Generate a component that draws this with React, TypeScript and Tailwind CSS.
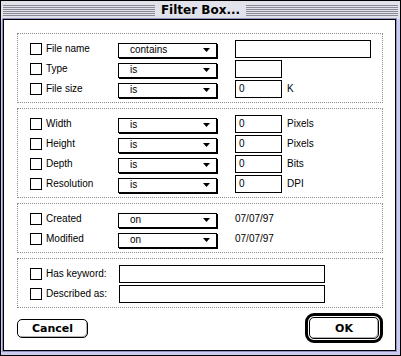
import React from "react";

type Row = {
  label: string;
  op?: string;
  field?: number;
  value?: string;
  unit?: string;
  text?: string;
};

const GROUPS: Row[][] = [
  [
    { label: "File name", op: "contains", field: 136 },
    { label: "Type", op: "is", field: 47 },
    { label: "File size", op: "is", field: 47, value: "0", unit: "K" },
  ],
  [
    { label: "Width", op: "is", field: 47, value: "0", unit: "Pixels" },
    { label: "Height", op: "is", field: 47, value: "0", unit: "Pixels" },
    { label: "Depth", op: "is", field: 47, value: "0", unit: "Bits" },
    { label: "Resolution", op: "is", field: 47, value: "0", unit: "DPI" },
  ],
  [
    { label: "Created", op: "on", text: "07/07/97" },
    { label: "Modified", op: "on", text: "07/07/97" },
  ],
];

function Stripes() {
  return (
    <div className="flex-1 flex flex-col gap-px">
      {[0, 1, 2, 3, 4, 5].map(i => (
        <div key={i} className="h-px bg-[#8a8a96]" />
      ))}
    </div>
  );
}

function Checkbox() {
  return <div className="w-[12px] h-[12px] border border-black bg-white shrink-0" />;
}

function Popup({ value }: { value: string }) {
  return (
    <div className="w-[99px] h-[15px] mt-[2px] border border-black bg-white shadow-[1px_1px_0_0_#000] flex items-center pl-[11px] pr-[6px] shrink-0">
      <span className="flex-1 leading-none">{value}</span>
      <svg width="7" height="4" viewBox="0 0 7 4">
        <polygon points="0,0 7,0 3.5,4" fill="#000" />
      </svg>
    </div>
  );
}

function FilterRow({ row }: { row: Row }) {
  return (
    <div className="h-[20px] flex items-center">
      <div className="w-[88px] flex items-center gap-[4px] shrink-0">
        <Checkbox />
        <span className="leading-none">{row.label}</span>
      </div>
      {row.op && <Popup value={row.op} />}
      <div className="ml-[18px] flex items-center">
        {row.field && (
          <div
            className="h-[18px] border border-black bg-white flex items-center pl-[3px] leading-none"
            style={{ width: row.field }}
          >
            {row.value}
          </div>
        )}
        {row.unit && <span className="ml-[5px] leading-none">{row.unit}</span>}
        {row.text && <span className="leading-none">{row.text}</span>}
      </div>
    </div>
  );
}

function Group({ children }: { children: React.ReactNode }) {
  return (
    <div className="border border-dotted border-[#8c8c8c] pt-[5px] pb-[3px] px-[12px] flex flex-col">
      {children}
    </div>
  );
}

export default function App() {
  return (
    <div className="w-[401px] h-[356px] border border-black bg-[#ccccf0] flex flex-col font-['Liberation_Sans',Arial,sans-serif] text-[10px] text-black">
      {/* title bar */}
      <div className="h-[18px] shrink-0 bg-[#e2e2ea] flex items-center px-[2px]">
        <Stripes />
        <span className="px-[6px] font-['DejaVu_Sans',sans-serif] font-bold text-[12px] leading-none">
          Filter Box...
        </span>
        <Stripes />
      </div>

      {/* dialog body */}
      <div className="flex-1 ml-[2px] mr-[4px] mb-[4px] border border-black bg-white shadow-[0_0_0_1px_#8f8fc0] pt-[13px] pl-[13px] pr-[12px] flex flex-col gap-[5px]">
        {GROUPS.map((rows, i) => (
          <Group key={i}>
            {rows.map(r => (
              <FilterRow key={r.label} row={r} />
            ))}
          </Group>
        ))}

        <Group>
          {["Has keyword:", "Described as:"].map(l => (
            <div key={l} className="h-[20px] flex items-center">
              <div className="w-[89px] flex items-center gap-[4px] shrink-0">
                <Checkbox />
                <span className="leading-none">{l}</span>
              </div>
              <div className="w-[206px] h-[18px] border border-black bg-white" />
            </div>
          ))}
        </Group>

        <div className="h-[30px] flex items-center justify-between">
          <button className="w-[71px] h-[19px] border border-black rounded-[5px] bg-white shadow-[inset_-1px_-1px_0_0_#b0b0b0] font-['DejaVu_Sans',sans-serif] font-bold text-[11px] leading-none">
            Cancel
          </button>
          <div className="w-[78px] h-[30px] border-[3px] border-black rounded-[9px] p-px flex">
            <button className="flex-1 border border-black rounded-[5px] bg-white shadow-[inset_-1px_-1px_0_0_#b0b0b0] font-['DejaVu_Sans',sans-serif] font-bold text-[11px] leading-none">
              OK
            </button>
          </div>
        </div>
      </div>
    </div>
  );
}
